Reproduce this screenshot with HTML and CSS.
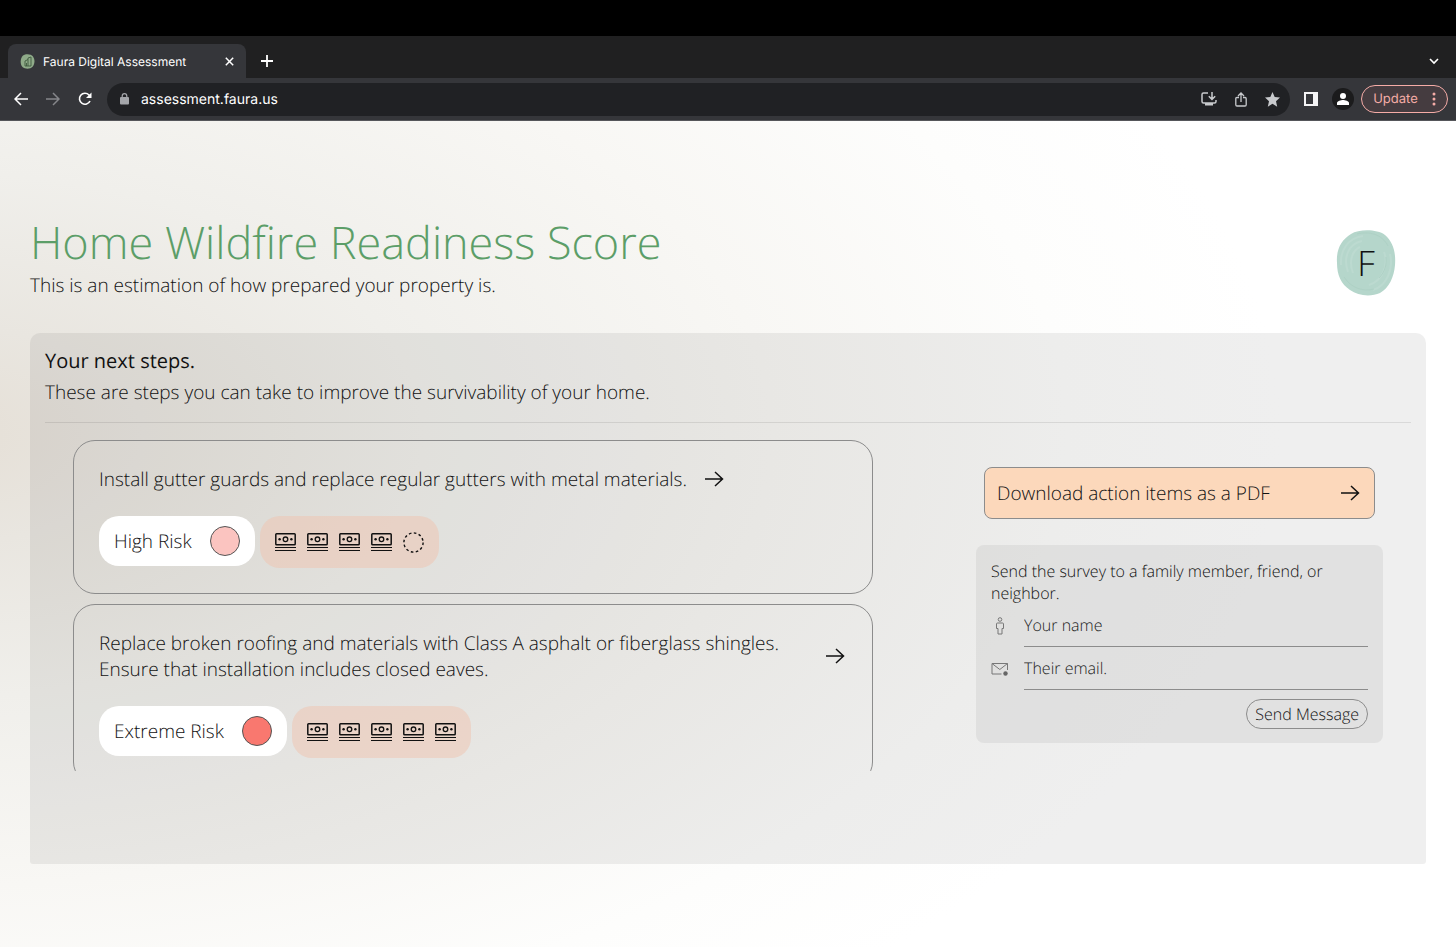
FILE: index.html
```html
<!DOCTYPE html>
<html lang="en">
<head>
<meta charset="utf-8">
<title>Faura Digital Assessment</title>
<link rel="stylesheet" href="styles.css">
</head>
<body>
<svg class="defs" width="0" height="0" aria-hidden="true">
  <symbol id="cash" viewBox="0 0 21 19">
    <g fill="none" stroke="#111">
      <rect x="0.8" y="0.8" width="19.4" height="10.9" rx="0.8" stroke-width="1.5"/>
      <circle cx="10.5" cy="6.3" r="2.3" stroke-width="1.3"/>
      <path d="M0 14.5h21M0 17.5h21" stroke-width="1.2"/>
    </g>
    <circle cx="4.6" cy="6.3" r="1.2" fill="#111"/>
    <circle cx="16.4" cy="6.3" r="1.2" fill="#111"/>
  </symbol>
  <symbol id="dashed" viewBox="0 0 21 21">
    <circle cx="10.5" cy="10.5" r="9.6" fill="none" stroke="#111" stroke-width="1.4" stroke-dasharray="2.6 2.43"/>
  </symbol>
  <symbol id="arrow" viewBox="0 0 20 18">
    <path d="M1 9h17.500M11 2l7.500 7-7.500 7" fill="none" stroke="#111" stroke-width="1.5"/>
  </symbol>
</svg>

<header class="browser">
  <div class="menubar"></div>
  <div class="tabstrip">
    <div class="tab">
      <svg class="favicon" viewBox="0 0 15 15" aria-hidden="true"><path d="M3 1.500C6-.5 11 0 13 2.500c2 3 2 7-.2 10C10 15.500 5 15 2.500 13 0 11 0 4 3 1.500z" fill="#8fab89"/><path d="M5 12V7l3-1.500V12zM8 5.500V4l3-1v9H8M6.500 12V9" fill="none" stroke="#3f5a40" stroke-width="0.900"/></svg>
      <span class="tab-title">Faura Digital Assessment</span>
      <button class="tab-close" aria-label="Close tab"><svg width="9" height="9" viewBox="0 0 9 9"><path d="M.8.8l7.400 7.400M8.200.8L.8 8.200" stroke="#fff" stroke-width="1.500"/></svg></button>
    </div>
    <button class="new-tab" aria-label="New tab"><svg width="12" height="12" viewBox="0 0 12 12"><path d="M6 0v12M0 6h12" stroke="#fff" stroke-width="1.800"/></svg></button>
    <button class="tab-menu" aria-label="Search tabs"><svg width="10" height="7" viewBox="0 0 10 7"><path d="M1 1l4 4 4-4" fill="none" stroke="#fff" stroke-width="1.600"/></svg></button>
  </div>
  <div class="toolbar">
    <div class="nav">
      <button aria-label="Back"><svg width="14" height="14" viewBox="0 0 14 14"><path d="M14 7H1.500M7 1L1 7l6 6" fill="none" stroke="#fff" stroke-width="1.500"/></svg></button>
      <button aria-label="Forward"><svg width="14" height="14" viewBox="0 0 14 14"><path d="M0 7h12.500M7 1l6 6-6 6" fill="none" stroke="#85868a" stroke-width="1.500"/></svg></button>
      <button aria-label="Reload"><svg width="14" height="14" viewBox="0 0 14 14"><path d="M12 9A5.500 5.500 0 1 1 11 3l1 1.200" fill="none" stroke="#fff" stroke-width="1.600"/><path d="M13.500.5V6H8z" fill="#fff"/></svg></button>
    </div>
    <div class="address">
      <svg width="9" height="12" viewBox="0 0 9 12" aria-hidden="true"><rect y="4" width="9" height="7.500" rx="1" fill="#a4a6aa"/><path d="M2.200 4.500V3a2.300 2.300 0 0 1 4.600 0v1.500" fill="none" stroke="#a4a6aa" stroke-width="1.200"/></svg>
      <input class="url" type="text" aria-label="Address" value="assessment.faura.us">
      <button aria-label="Install"><svg width="16" height="14" viewBox="0 0 16 14"><path d="M7 1H2.500Q1 1 1 2.500v7Q1 11 2.500 11h11q1.500 0 1.500-1.500V8M11 0v7M7.800 4.200L11 7.400l3.200-3.200" fill="none" stroke="#c8cacd" stroke-width="1.500"/><path d="M4 11h8v2.500H4z" fill="#c8cacd"/></svg></button>
      <button aria-label="Share"><svg width="12" height="15" viewBox="0 0 12 15"><path d="M4 5.500H2q-1.200 0-1.200 1.200v6q0 1.300 1.200 1.300h8q1.200 0 1.200-1.300v-6q0-1.200-1.200-1.200H8M6 10V1.500M3 4l3-3 3 3" fill="none" stroke="#c8cacd" stroke-width="1.300"/></svg></button>
      <button aria-label="Bookmark"><svg width="15" height="15" viewBox="0 0 15 15"><path d="M7.500 0l2.200 5.100 5.300.5-4 3.700 1.200 5.400-4.700-2.900-4.700 2.900L4 9.300 0 5.600l5.300-.5z" fill="#c8cacd"/></svg></button>
    </div>
    <button class="tool" aria-label="Side panel"><svg width="14" height="14" viewBox="0 0 14 14"><path d="M0 0h14v14H0zM2 2v10h7V2z" fill="#f4f4f5" fill-rule="evenodd"/></svg></button>
    <button class="tool avatar" aria-label="Profile"><svg width="12" height="12" viewBox="0 0 12 12"><circle cx="6" cy="3" r="3" fill="#fff"/><path d="M0 12v-2c0-2 4-3 6-3s6 1 6 3v2z" fill="#fff"/></svg></button>
    <button class="update">Update<svg width="4" height="14" viewBox="0 0 4 14" aria-hidden="true"><g fill="#f5aca7"><circle cx="2" cy="2" r="1.500"/><circle cx="2" cy="7" r="1.500"/><circle cx="2" cy="12" r="1.500"/></g></svg></button>
  </div>
</header>

<main class="page">
  <div class="heading">
    <div>
      <h1>Home Wildfire Readiness Score</h1>
      <p class="lead">This is an estimation of how prepared your property is.</p>
    </div>
    <button class="profile" aria-label="Account">
      <svg class="blob" viewBox="0 0 60 66" aria-hidden="true">
        <path d="M15 4C23-1 41-1 49 5c8 7 11 17 10 30-1 12-6 23-15 28-9 4-22 3-30-3C5 54 1 45 1 33 0 20 5 10 15 4z" fill="#b5d6cb"/>
        <g fill="none" stroke="#bcdad0" stroke-width="2"><path d="M5 35C4 20 12 8 27 6M54 24c4 16-4 32-17 36M12 42c-5-14 0-28 14-31M48 22c5 14-2 29-15 33M17 43c-4-10-2-22 7-26"/></g>
        <path d="M8 47C15 58 27 62 38 59M21 4c12-3 25 0 31 12M43 48c6-6 8-14 7-21" fill="none" stroke="#aed1c5" stroke-width="1"/>
      </svg>
      <span>F</span>
    </button>
  </div>

  <section class="panel">
    <div class="panel-head">
      <h2>Your next steps.</h2>
      <p>These are steps you can take to improve the survivability of your home.</p>
    </div>
    <div class="columns">
      <div class="steps">
        <article class="step">
          <div class="step-text">
            <p>Install gutter guards and replace regular gutters with metal materials.</p>
            <button aria-label="Open step"><svg class="arrow"><use href="#arrow"/></svg></button>
          </div>
          <div class="tags">
            <span class="risk">High Risk<i class="dot high"></i></span>
            <span class="cost"><svg><use href="#cash"/></svg><svg><use href="#cash"/></svg><svg><use href="#cash"/></svg><svg><use href="#cash"/></svg><svg><use href="#dashed"/></svg></span>
          </div>
        </article>
        <article class="step">
          <div class="step-text">
            <p>Replace broken roofing and materials with Class A asphalt or fiberglass shingles. Ensure that installation includes closed eaves.</p>
            <button aria-label="Open step"><svg class="arrow"><use href="#arrow"/></svg></button>
          </div>
          <div class="tags">
            <span class="risk">Extreme Risk<i class="dot extreme"></i></span>
            <span class="cost"><svg><use href="#cash"/></svg><svg><use href="#cash"/></svg><svg><use href="#cash"/></svg><svg><use href="#cash"/></svg><svg><use href="#cash"/></svg></span>
          </div>
        </article>
      </div>
      <aside class="side">
        <button class="download">Download action items as a PDF<svg class="arrow"><use href="#arrow"/></svg></button>
        <form class="share">
          <p>Send the survey to a family member, friend, or neighbor.</p>
          <div class="field">
            <label for="name" aria-label="Your name"><svg width="18" height="18" viewBox="0 0 18 18"><g fill="none" stroke="#777" stroke-width="1"><circle cx="9" cy="2.500" r="1.800"/><path d="M6.500 6h5q1 0 1 1v4.500H11V17H7v-5.500H5.500V7q0-1 1-1z"/></g></svg></label>
            <input id="name" type="text" placeholder="Your name">
          </div>
          <div class="field">
            <label for="email" aria-label="Their email"><svg width="18" height="18" viewBox="0 0 18 18"><path d="M10.500 14H1V3.500h15.500V10M1 3.500l7.800 6 7.700-6" fill="none" stroke="#777"/><circle cx="14.500" cy="13.500" r="2.200" fill="#666"/></svg></label>
            <input id="email" type="email" placeholder="Their email.">
          </div>
          <button class="send" type="button">Send Message</button>
        </form>
      </aside>
    </div>
  </section>
</main>
</body>
</html>
```
FILE: styles.css
```css
* { box-sizing: border-box; }
body {
  margin: 0;
  min-height: 100vh;
  display: flex;
  flex-direction: column;
  font-family: "Open Sans", sans-serif;
  font-weight: 300;
  font-size: 19px;
  color: #111;
  text-rendering: geometricPrecision;
}
h1, h2, p { margin: 0; font-weight: 300; }
button, input { font: inherit; color: inherit; background: none; border: 0; padding: 0; text-rendering: inherit; }
button { display: flex; align-items: center; justify-content: center; cursor: pointer; }
.defs { position: absolute; }

/* Browser frame */
.browser { font-family: Inter, sans-serif; font-weight: 400; color: #fff; background: #202021; }
.menubar { height: 36px; background: #000; }
.tabstrip { height: 42px; display: flex; align-items: stretch; padding: 8px 16px 0 8px; }
.tab {
  width: 238px;
  display: flex;
  align-items: center;
  gap: 8px;
  padding: 0 12px;
  background: #35363a;
  border-radius: 8px 8px 0 0;
  font-size: 12px;
}
.favicon { width: 15px; height: 15px; }
.tab-title { flex: 1; }
.new-tab { width: 42px; }
.tab-menu { margin-left: auto; width: 12px; }
.toolbar {
  height: 43px;
  display: flex;
  align-items: center;
  padding: 0 8px 0 14px;
  background: #35363a;
  border-bottom: 1px solid #55565a;
}
.nav { display: flex; gap: 18px; margin-right: 15px; }
.address {
  flex: 1;
  height: 33px;
  display: flex;
  align-items: center;
  gap: 18px;
  padding: 0 10px 0 13px;
  border-radius: 17px;
  background: #202124;
}
.url { flex: 1; min-width: 0; margin-left: -6px; font-size: 14px; }
.tool { margin-left: 14px; }
.avatar { width: 22px; height: 22px; margin-left: 14px; border-radius: 50%; background: #1b1b1c; }
.update {
  width: 87px;
  height: 28px;
  gap: 14px;
  margin-left: 7px;
  border: 1px solid #f5aca7;
  border-radius: 14px;
  background: #453c40;
  color: #f5aca7;
  font-size: 13px;
}

/* Page */
.page {
  flex: 1;
  padding: 95px 30px 83px;
  background: radial-gradient(ellipse 92% 88% at -4% 38%, #e5dfd6 0%, #e9e6e0 15%, #f0efeb 36%, #f8f7f4 62%, #fdfdfc 84%, #fff 100%) #fff;
}
.heading { display: flex; justify-content: space-between; align-items: center; padding-right: 30px; }
h1 { font-size: 45px; line-height: 54px; color: #5c9e68; }
.lead { line-height: 30px; }
.profile { display: grid; place-items: center; width: 60px; height: 66px; margin-top: 10px; font-size: 35px; }
.profile > * { grid-area: 1 / 1; }
.blob { width: 60px; height: 66px; }

.panel {
  min-height: 531px;
  margin-top: 33px;
  padding: 12px 15px;
  border-radius: 10px 10px 3px 3px;
  background: rgba(0, 0, 0, 0.063);
}
.panel-head { padding-bottom: 14px; border-bottom: 1px solid rgba(0, 0, 0, 0.09); }
.panel-head h2 { font-size: 20px; font-weight: 400; line-height: 32px; }
.panel-head p { line-height: 31px; }
.columns {
  display: grid;
  grid-template-columns: 800fr 407fr;
  column-gap: 103px;
  padding: 17px 28px 0;
}
.steps { height: 331px; overflow: hidden; }
.step {
  padding: 25px;
  margin-bottom: 10px;
  border: 1px solid #8c8c8c;
  border-radius: 22px;
}
.step-text { display: flex; align-items: center; gap: 17px; padding-right: 2px; line-height: 26px; }
.arrow { width: 20px; height: 18px; flex: none; }
.tags { display: flex; gap: 5px; margin-top: 24px; }
.risk {
  display: flex;
  align-items: center;
  gap: 18px;
  height: 50px;
  padding: 0 15px;
  border-radius: 20px;
  background: #fff;
}
.dot { width: 30px; height: 30px; border: 1px solid #555; border-radius: 50%; }
.high { background: #fbc4c0; }
.extreme { background: #f9786f; }
.cost {
  display: flex;
  align-items: center;
  gap: 11px;
  height: 52px;
  padding: 0 15px;
  border-radius: 20px;
  background: rgba(240, 196, 176, 0.5);
}
.cost svg { width: 21px; height: 21px; }

.side { padding-top: 27px; }
.download {
  width: calc(100% - 16px);
  height: 52px;
  margin: 0 8px;
  padding: 0 14px 0 12px;
  justify-content: space-between;
  border: 1px solid #8c8c8c;
  border-radius: 8px;
  background: #fcd8bb;
}
.share {
  display: flex;
  flex-direction: column;
  margin-top: 26px;
  padding: 15px 15px 14px;
  border-radius: 8px;
  background: rgba(0, 0, 0, 0.055);
  font-size: 16px;
  line-height: 22px;
}
.field { display: flex; align-items: center; gap: 15px; height: 43px; }
.field label { display: flex; }
.field input {
  flex: 1;
  min-width: 0;
  height: 43px;
  border-bottom: 1px solid #8c8c8c;
}
.field input::placeholder { color: #222; opacity: 1; }
.send {
  align-self: flex-end;
  height: 30px;
  margin-top: 9px;
  padding: 0 8px;
  border: 1px solid #8c8c8c;
  border-radius: 15px;
}
```
